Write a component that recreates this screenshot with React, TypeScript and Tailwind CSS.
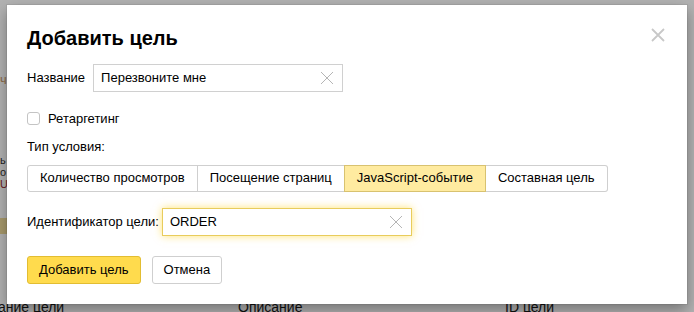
import React from "react";

const font = { fontFamily: '"Liberation Sans", Arial, sans-serif' };

const ClearIcon = ({ className }: { className?: string }) => (
  <svg width="14" height="14" viewBox="0 0 14 14" className={className}>
    <path d="M1 1L13 13M13 1L1 13" stroke="currentColor" strokeWidth="1" fill="none" />
  </svg>
);

const segments = ["Количество просмотров", "Посещение страниц", "JavaScript-событие", "Составная цель"];

const App = () => {
  return (
    <div className="relative w-[694px] h-[312px] overflow-hidden bg-[#b2b2b2] text-[13px]" style={font}>
      {/* page behind the overlay */}
      <div className="absolute left-0 top-[70px] text-[#8a6a4a]">ч</div>
      <div className="absolute left-0 top-[154px] text-[11px] leading-[12px] text-[#222]">
        <div>ь</div>
        <div>о</div>
        <div className="text-[#6a1a1a]">U</div>
      </div>
      <div className="absolute left-0 top-[218px] w-[8px] h-[16px] bg-[#a89a6c]" />
      <div className="absolute left-0 top-[299px] w-full flex text-[#111] text-[14px] leading-[16px]">
        <span className="-ml-[2px] w-[240px]">ание цели</span>
        <span className="w-[267px]">Описание</span>
        <span>ID цели</span>
      </div>

      {/* dialog */}
      <div className="absolute left-[7px] top-[5px] w-[680px] h-[299px] bg-white shadow-[0_0_0_1px_rgba(0,0,0,0.06),0_6px_14px_rgba(0,0,0,0.35)] px-5 pt-[21px] text-black">
        <button className="absolute right-[22px] top-[23px] text-[#c8c8c8]">
          <svg width="14" height="14" viewBox="0 0 14 14">
            <path d="M1 1L13 13M13 1L1 13" stroke="currentColor" strokeWidth="1.8" fill="none" />
          </svg>
        </button>

        <h2 className="text-[20px] leading-[24px] font-bold">Добавить цель</h2>

        <div className="mt-[14px] flex items-center gap-[8px]">
          <span>Название</span>
          <div className="flex items-center w-[250px] h-[28px] border border-[#d0d0d0] pl-[7px] pr-[8px]">
            <span className="flex-1">Перезвоните мне</span>
            <ClearIcon className="text-[#b5b5b5]" />
          </div>
        </div>

        <label className="mt-[17px] flex items-center gap-[8px]">
          <span className="w-[13px] h-[13px] border border-[#c4c4c4] rounded-[3px]" />
          <span>Ретаргетинг</span>
        </label>

        <div className="mt-[10px] leading-[15px]">Тип условия:</div>

        <div className="mt-[11px] flex h-[27px]">
          {segments.map((s, i) => (
            <div
              key={s}
              className={
                i === 2
                  ? "flex items-center px-[12px] border border-[#d8c270] bg-[#ffeba0] -ml-px"
                  : i === 0
                  ? "flex items-center px-[12px] border border-[#cfcfcf] rounded-l-[3px]"
                  : i === 3
                  ? "flex items-center px-[12px] border border-[#cfcfcf] border-l-0 rounded-r-[3px]"
                  : "flex items-center px-[12px] border border-[#cfcfcf] -ml-px"
              }
            >
              {s}
            </div>
          ))}
        </div>

        <div className="mt-[16px] flex items-center gap-[3px]">
          <span>Идентификатор цели:</span>
          <div className="flex items-center w-[250px] h-[28px] border border-[#e8cc5c] shadow-[0_0_8px_rgba(255,204,0,0.55)] pl-[7px] pr-[8px]">
            <span className="flex-1">ORDER</span>
            <ClearIcon className="text-[#b5b5b5]" />
          </div>
        </div>

        <div className="mt-[20px] flex gap-[11px]">
          <button className="h-[28px] px-[11px] rounded-[3px] bg-[#ffdb4d] border border-[#e2bd32]">Добавить цель</button>
          <button className="h-[28px] px-[11px] rounded-[3px] bg-white border border-[#cfcfcf]">Отмена</button>
        </div>
      </div>
    </div>
  );
};

export default App;
